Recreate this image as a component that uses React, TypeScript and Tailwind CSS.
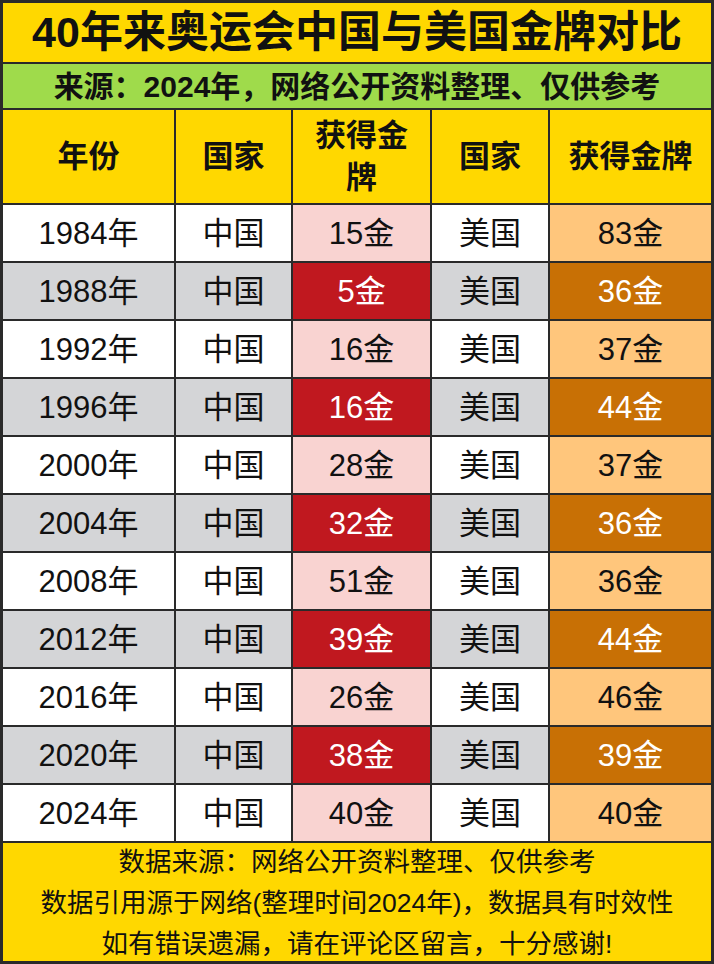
const rows: [string, string, string][] = [
  ['1984', '15', '83'],
  ['1988', '5', '36'],
  ['1992', '16', '37'],
  ['1996', '16', '44'],
  ['2000', '28', '37'],
  ['2004', '32', '36'],
  ['2008', '51', '36'],
  ['2012', '39', '44'],
  ['2016', '26', '46'],
  ['2020', '38', '39'],
  ['2024', '40', '40'],
]

const font = { fontFamily: '"Liberation Sans", "Noto Sans CJK SC", sans-serif' }

export default function App() {
  return (
    <div
      className="w-[714px] h-[964px] bg-[#2a2a2a] p-[3px] text-[#111]"
      style={font}
    >
      <div className="grid grid-cols-[171px_115px_137px_116px_161px] gap-[2px]">
        {/* Title */}
        <div className="col-span-5 h-[59px] bg-[#ffd800] flex items-center justify-center text-[43px] font-bold">
          40年来奥运会中国与美国金牌对比
        </div>
        <div className="col-span-5 h-[44px] bg-[#9fdb4b] flex items-center justify-center text-[30px] font-bold">
          来源：2024年，网络公开资料整理、仅供参考
        </div>

        {/* Header */}
        {['年份', '国家', '获得金牌', '国家', '获得金牌'].map((h, i) => (
          <div
            key={i}
            className="h-[93px] bg-[#ffd800] flex items-center justify-center text-center text-[31px] font-bold leading-[42px] px-2"
          >
            {h}
          </div>
        ))}

        {/* Data rows */}
        {rows.map(([year, cn, us], i) => {
          const odd = i % 2 === 1
          const base = odd ? 'bg-[#d4d5d7]' : 'bg-white'
          const cnBg = odd ? 'bg-[#c0181f] text-white' : 'bg-[#f9d3d1]'
          const usBg = odd ? 'bg-[#c87005] text-white' : 'bg-[#ffc67c]'
          const cell = 'h-[56px] flex items-center justify-center text-[31px] pt-[3px]'
          return [
            <div key={`${year}-a`} className={`${cell} ${base}`}>{year}年</div>,
            <div key={`${year}-b`} className={`${cell} ${base}`}>中国</div>,
            <div key={`${year}-c`} className={`${cell} ${cnBg}`}>{cn}金</div>,
            <div key={`${year}-d`} className={`${cell} ${base}`}>美国</div>,
            <div key={`${year}-e`} className={`${cell} ${usBg}`}>{us}金</div>,
          ]
        })}

        {/* Footer */}
        <div className="col-span-5 h-[118px] bg-[#ffd800] flex flex-col items-center justify-center text-[26.5px] leading-[41px] pt-[3px]">
          <div>数据来源：网络公开资料整理、仅供参考</div>
          <div>数据引用源于网络(整理时间2024年)，数据具有时效性</div>
          <div>如有错误遗漏，请在评论区留言，十分感谢!</div>
        </div>
      </div>
    </div>
  )
}
